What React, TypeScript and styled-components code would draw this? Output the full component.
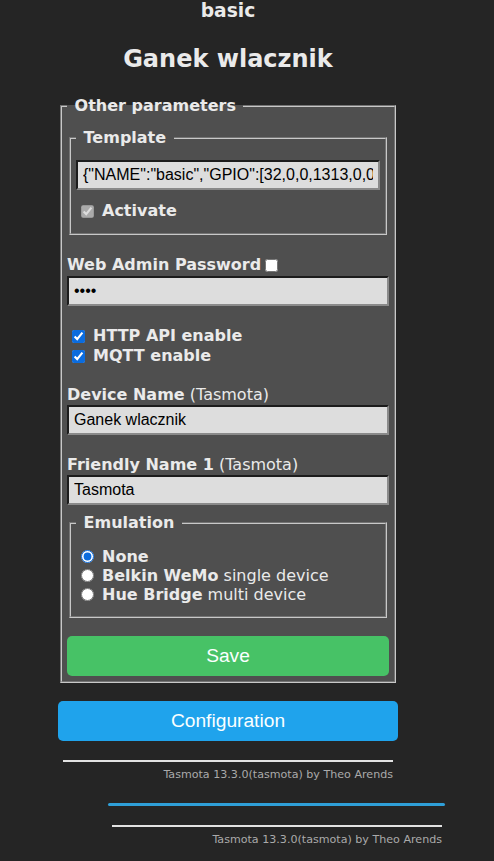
import React from "react";
import styled, { createGlobalStyle } from "styled-components";

const Global = createGlobalStyle`
  html, body { margin: 0; padding: 0; background: #252525; }
  body { font-family: "DejaVu Sans", Verdana, sans-serif; color: #eaeaea; font-size: 16px; }
`;

const Page = styled.div`
  width: 494px;
  height: 861px;
  overflow: hidden;
  background: #252525;
`;

const Column = styled.div`
  width: 340px;
  margin-left: 58px;
  display: flex;
  flex-direction: column;
`;

const Header = styled.div`
  text-align: center;
  color: #eaeaea;
`;

const DeviceType = styled.h3`
  margin: 0;
  padding-top: 1px;
  font-size: 18.7px;
  line-height: 20px;
  font-weight: bold;
`;

const DeviceName = styled.h2`
  margin: 24px 0 0 0;
  font-size: 24px;
  line-height: 28px;
  font-weight: bold;
`;

const Fieldset = styled.fieldset`
  margin: 0 2px;
  padding: 5px;
  border: 2px groove #c8c8c8;
  background: #4f4f4f;
  min-width: 0;
`;

const Legend = styled.legend`
  padding: 0 2px;
  font-weight: bold;
  font-size: 16px;
  line-height: 19px;
  color: #eaeaea;
`;

const OuterFieldset = styled(Fieldset)`
  margin-top: 23px;
`;

const Stack = styled.div<{ $top: number }>`
  margin-top: ${(p) => p.$top}px;
`;

const TextInput = styled.input`
  display: block;
  width: 100%;
  box-sizing: border-box;
  height: 30px;
  padding: 4px 5px;
  font-family: "Liberation Sans", Arial, sans-serif;
  font-size: 16px;
  color: #000;
  background: #dddddd;
  border-style: solid;
  border-width: 2px;
  border-color: #1c1c1c #8a8a8a #8a8a8a #1c1c1c;
  outline: none;
  margin: 0;
`;

const Row = styled.label<{ $h?: number }>`
  display: flex;
  align-items: center;
  height: ${(p) => p.$h ?? 20}px;
  font-size: 16px;
  line-height: ${(p) => p.$h ?? 20}px;
  color: #eaeaea;
  white-space: nowrap;
`;

const Box = styled.input`
  width: 13px;
  height: 13px;
  margin: 0 8px 0 5px;
  accent-color: #0b6cde;
  flex: none;
`;

const TrailingBox = styled.input`
  width: 13px;
  height: 13px;
  margin: 0 0 0 4px;
  flex: none;
`;

const Label = styled.div`
  font-size: 16px;
  line-height: 20px;
  display: flex;
  align-items: center;
  white-space: nowrap;
`;

const Plain = styled.span`
  font-weight: normal;
  white-space: pre;
`;

const Bold = styled.b`
  font-weight: bold;
  white-space: pre;
`;

const Button = styled.button<{ $color: string }>`
  display: block;
  width: 100%;
  height: 40px;
  border: 0;
  border-radius: 5px;
  background: ${(p) => p.$color};
  color: #faffff;
  font-family: "Liberation Sans", Arial, sans-serif;
  font-size: 19.2px;
  line-height: 40px;
  padding: 0;
  cursor: pointer;
`;

const Footer = styled.div<{ $left: number }>`
  width: 330px;
  margin-left: ${(p) => p.$left}px;
  text-align: right;
`;

const Rule = styled.div`
  height: 2px;
  background: #e2e2e2;
`;

const FooterLink = styled.a`
  display: block;
  margin-top: 6px;
  font-family: "DejaVu Sans", Verdana, sans-serif;
  font-size: 11.1px;
  line-height: 13px;
  color: #aaaaaa;
  text-decoration: none;
`;

const Progress = styled.div`
  width: 337px;
  height: 3px;
  margin: 22px 0 0 108px;
  border-radius: 2px;
  background: #2f9fd8;
`;

export default function App() {
  return (
    <Page>
      <Global />
      <Column>
        <Header>
          <DeviceType>basic</DeviceType>
          <DeviceName>Ganek wlacznik</DeviceName>
        </Header>
        <OuterFieldset>
          <Legend>{"\u00a0Other parameters\u00a0"}</Legend>
          <Stack $top={8}>
            <Fieldset>
              <Legend>{"\u00a0Template\u00a0"}</Legend>
              <Stack $top={8}>
                <TextInput
                  readOnly
                  value={'{"NAME":"basic","GPIO":[32,0,0,1313,0,0,0,0,0,0,224,0,0,0],"FLAG":0,"BASE":1}'}
                />
              </Stack>
              <Stack $top={11}>
                <Row>
                  <Box type="checkbox" checked disabled readOnly />
                  <Bold>Activate</Bold>
                </Row>
              </Stack>
              <Stack $top={7} />
            </Fieldset>
          </Stack>
          <Stack $top={20}>
            <Label>
              <Bold>Web Admin Password</Bold>
              <TrailingBox type="checkbox" readOnly />
            </Label>
          </Stack>
          <Stack $top={1}>
            <TextInput type="password" readOnly value="****" />
          </Stack>
          <Stack $top={20}>
            <Row>
              <Box type="checkbox" checked readOnly />
              <Bold>HTTP API enable</Bold>
            </Row>
            <Row>
              <Box type="checkbox" checked readOnly />
              <Bold>MQTT enable</Bold>
            </Row>
          </Stack>
          <Stack $top={19}>
            <Label>
              <Bold>Device Name</Bold>
              <Plain> (Tasmota)</Plain>
            </Label>
          </Stack>
          <Stack $top={0}>
            <TextInput readOnly value="Ganek wlacznik" />
          </Stack>
          <Stack $top={20}>
            <Label>
              <Bold>Friendly Name 1</Bold>
              <Plain> (Tasmota)</Plain>
            </Label>
          </Stack>
          <Stack $top={0}>
            <TextInput readOnly value="Tasmota" />
          </Stack>
          <Stack $top={8}>
            <Fieldset>
              <Legend>{"\u00a0Emulation\u00a0"}</Legend>
              <Stack $top={10}>
                <Row $h={19}>
                  <Box type="radio" name="emu" checked readOnly />
                  <Bold>None</Bold>
                </Row>
                <Row $h={19}>
                  <Box type="radio" name="emu" readOnly />
                  <Bold>Belkin WeMo</Bold>
                  <Plain> single device</Plain>
                </Row>
                <Row $h={19}>
                  <Box type="radio" name="emu" readOnly />
                  <Bold>Hue Bridge</Bold>
                  <Plain> multi device</Plain>
                </Row>
              </Stack>
              <Stack $top={7} />
            </Fieldset>
          </Stack>
          <Stack $top={18}>
            <Button $color="#47c266">Save</Button>
          </Stack>
        </OuterFieldset>
        <Stack $top={18}>
          <Button $color="#1fa3ec">Configuration</Button>
        </Stack>
      </Column>
      <Stack $top={19}>
        <Footer $left={63}>
          <Rule />
          <FooterLink href="#">Tasmota 13.3.0(tasmota) by Theo Arends</FooterLink>
        </Footer>
      </Stack>
      <Progress />
      <Stack $top={19}>
        <Footer $left={112}>
          <Rule />
          <FooterLink href="#">Tasmota 13.3.0(tasmota) by Theo Arends</FooterLink>
        </Footer>
      </Stack>
    </Page>
  );
}
